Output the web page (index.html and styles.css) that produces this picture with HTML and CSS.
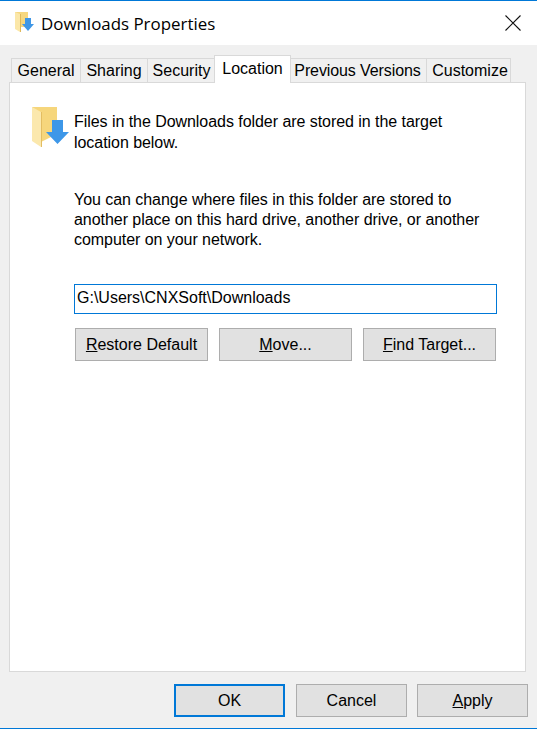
FILE: index.html
```html
<!DOCTYPE html>
<html lang="en">
<head>
    <meta charset="UTF-8">
    <title>Downloads Properties</title>
    <link rel="stylesheet" href="styles.css">
</head>
<body>
    <div class="dialog">
        <div class="titlebar">
            <svg class="title-icon" width="20" height="20" viewBox="0 0 20 20">
                <path d="M0 0h13v15H0z" fill="#f6d77f"/>
                <path d="M0 0l5 2v18l-5-3z" fill="#fbe7a8"/>
                <path d="M5.500 2v18" stroke="#e0b95a" fill="none"/>
                <path d="M10 6h6v6h3l-6 7-6-7h3z" fill="#3f97e6"/>
            </svg>
            <span class="title-text">Downloads Properties</span>
            <svg class="close-icon" width="16" height="16" viewBox="0 0 16 16">
                <path d="M.5.5l15 15M15.500.5l-15 15" stroke="#111" stroke-width="1.1" fill="none"/>
            </svg>
        </div>

        <div class="body">
            <div class="tabs">
                <div class="tab tab-general">General</div>
                <div class="tab tab-sharing">Sharing</div>
                <div class="tab tab-security">Security</div>
                <div class="tab tab-location active">Location</div>
                <div class="tab tab-previous">Previous Versions</div>
                <div class="tab tab-customize">Customize</div>
            </div>

            <div class="panel">
                <div class="intro">
                    <svg class="folder-icon" width="38" height="42" viewBox="0 0 38 42">
                        <path d="M0 1h25v27L9 36z" fill="#f6d67c"/>
                        <path d="M0 1l9 5v35l-9-6z" fill="#fbe8ad"/>
                        <path d="M9.500 6v35" stroke="#e3bd62" fill="none"/>
                        <path d="M20 14h11v12h6L25.500 38 14 26h6z" fill="#3d97e8"/>
                    </svg>
                    <p class="intro-text">Files in the Downloads folder are stored in the target location below.</p>
                </div>

                <p class="note">You can change where files in this folder are stored to another place on this hard drive, another drive, or another computer on your network.</p>

                <input class="path-input" type="text" value="G:\Users\CNXSoft\Downloads">

                <div class="path-actions">
                    <button class="btn btn-path"><u>R</u>estore Default</button>
                    <button class="btn btn-path"><u>M</u>ove...</button>
                    <button class="btn btn-path"><u>F</u>ind Target...</button>
                </div>
            </div>

            <div class="footer">
                <button class="btn btn-footer btn-default">OK</button>
                <button class="btn btn-footer">Cancel</button>
                <button class="btn btn-footer"><u>A</u>pply</button>
            </div>
        </div>
    </div>
</body>
</html>
```

FILE: styles.css
```css
:root {
    --blue: #0078d7;
    --face: #f0f0f0;
    --line: #d9d9d9;
    --btn: #e1e1e1;
    --btn-line: #adadad;
}

* {
    margin: 0;
    padding: 0;
    box-sizing: border-box;
}

body {
    font-family: "Liberation Sans", Arial, sans-serif;
    font-size: 16px;
    color: #000;
    background-color: var(--face);
}

.dialog {
    width: 537px;
    height: 729px;
    display: flex;
    flex-direction: column;
    border-top: 1px solid var(--blue);
    border-bottom: 1px solid var(--blue);
}

.titlebar {
    height: 44px;
    flex: none;
    display: flex;
    align-items: center;
    padding: 0 16px 0 15px;
    background-color: #fff;
}

.title-icon {
    flex: none;
    margin: -2px 6px 0 0;
}

.title-text {
    font-family: "Open Sans", sans-serif;
    font-size: 16.9px;
    flex: 1;
}

.close-icon {
    flex: none;
}

.body {
    flex: 1;
    display: flex;
    flex-direction: column;
    padding: 11px 9px 0 9px;
}

.tabs {
    height: 27px;
    display: flex;
    align-items: flex-end;
    padding-left: 2px;
    margin-bottom: -1px;
    position: relative;
    z-index: 1;
}

.tab {
    height: 25px;
    line-height: 23px;
    text-align: center;
    border: 1px solid var(--line);
    border-right: none;
    background-color: var(--face);
}

.tab-general { width: 69px; }
.tab-sharing { width: 67px; }
.tab-security { width: 67px; padding-left: 1px; }
.tab-location { width: 77px; }
.tab-previous { width: 136px; padding-right: 2px; letter-spacing: -0.1px; }
.tab-customize { width: 85px; padding-left: 3px; border-right: 1px solid var(--line); }

.tab.active {
    height: 28px;
    line-height: 26px;
    background-color: #fff;
    border-bottom: none;
    border-right: 1px solid var(--line);
    margin-right: -1px;
    position: relative;
}

.panel {
    width: 517px;
    height: 590px;
    flex: none;
    background-color: #fff;
    border: 1px solid var(--line);
    padding: 23px 28px 0 22px;
}

.intro {
    display: flex;
    align-items: flex-start;
}

.folder-icon {
    flex: none;
    margin-right: 4px;
}

.intro-text {
    width: 423px;
    line-height: 20.500px;
    padding-top: 6px;
    letter-spacing: -0.05px;
}

.note {
    width: 423px;
    margin: 37px 0 0 42px;
    line-height: 20.200px;
    letter-spacing: -0.05px;
}

.path-input {
    display: block;
    width: 423px;
    height: 30px;
    margin: 33.500px 0 0 42px;
    padding: 0 2px 2px;
    border: 1px solid var(--blue);
    outline: none;
    font-family: inherit;
    font-size: 16px;
    color: #000;
}

.path-actions {
    display: flex;
    gap: 11px;
    margin: 14px 0 0 43px;
}

.btn {
    height: 33px;
    font-family: inherit;
    font-size: 16px;
    color: #000;
    background-color: var(--btn);
    border: 1px solid var(--btn-line);
}

.btn-path {
    width: 133px;
    padding-top: 1px;
}

.footer {
    display: flex;
    justify-content: flex-end;
    gap: 10px;
    margin: 12px 0 0 0;
}

.btn-footer {
    width: 111px;
}

.btn-default {
    border: 2px solid var(--blue);
    margin-right: 1px;
}
```
